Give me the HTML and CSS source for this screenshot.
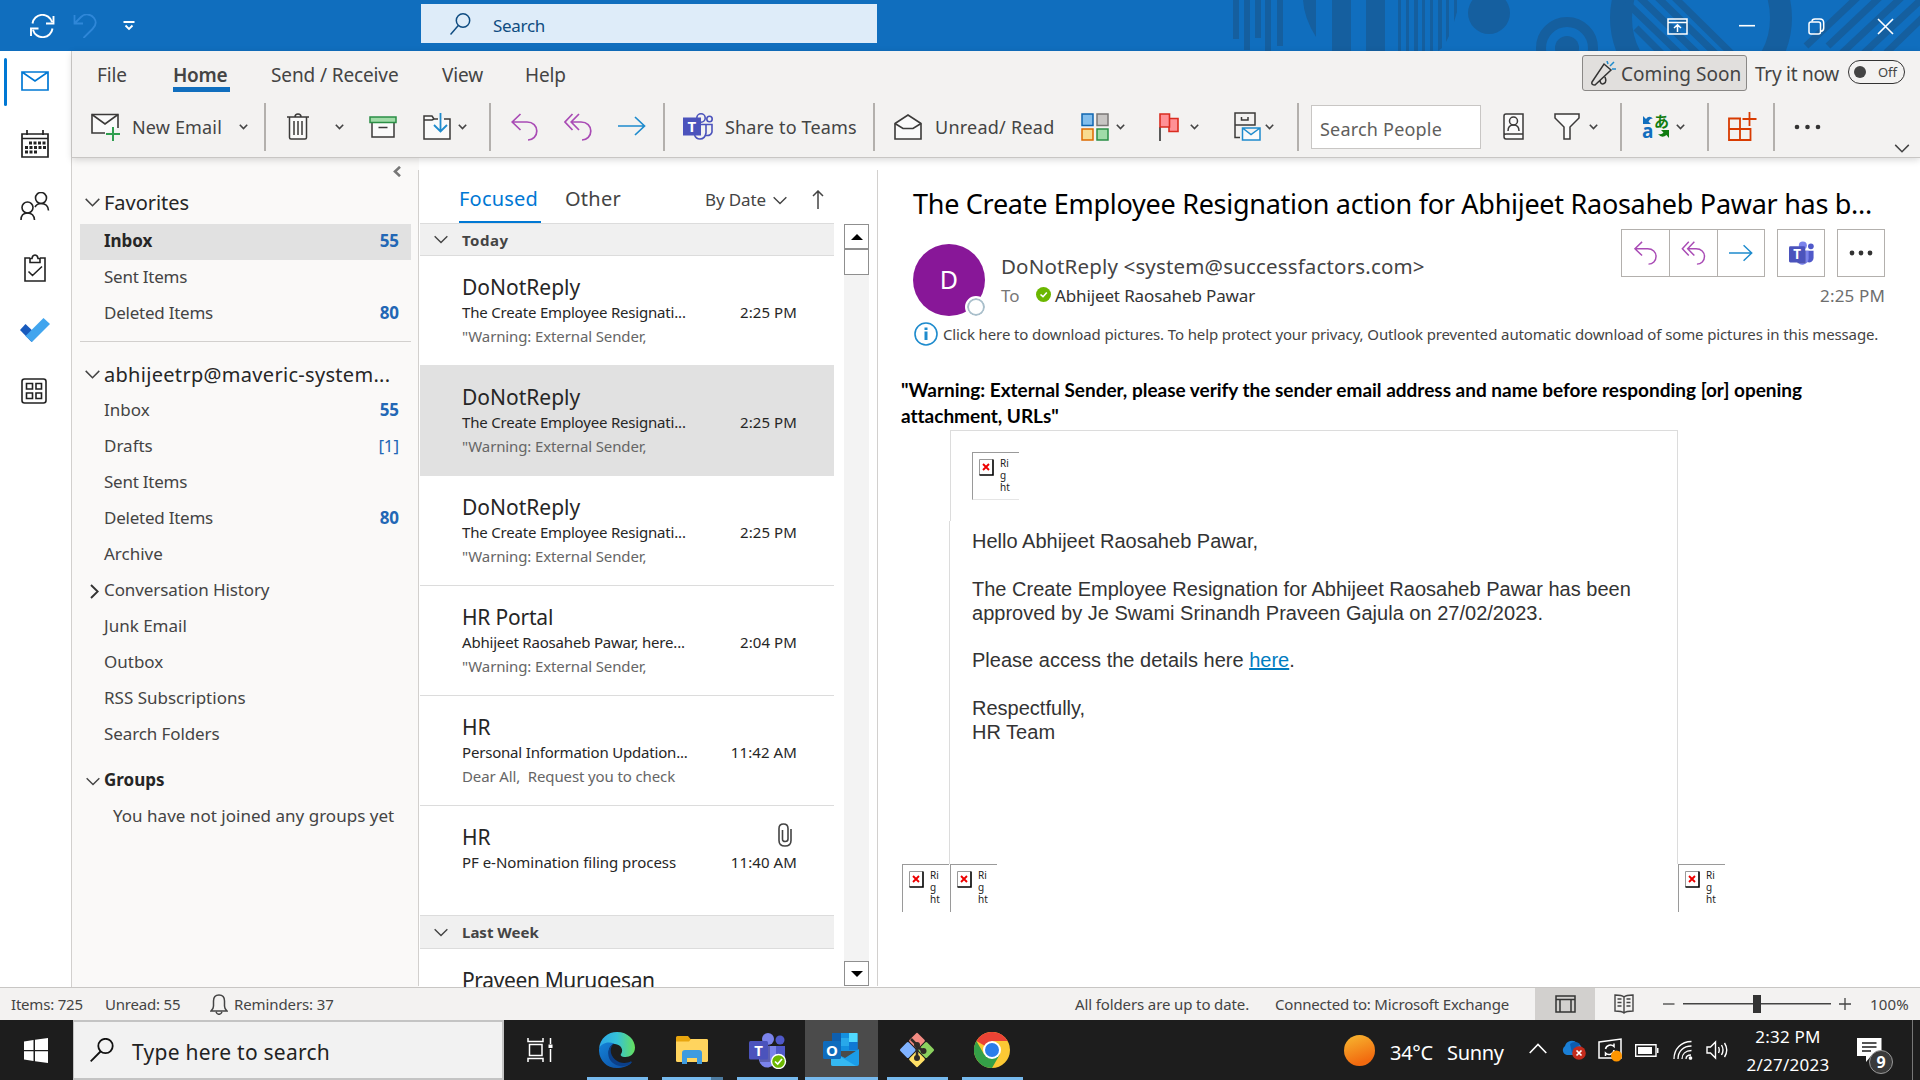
FILE: index.html
```html
<!DOCTYPE html>
<html lang="en">
<head>
<meta charset="utf-8">
<title>Inbox - Outlook</title>
<link rel="stylesheet" href="styles.css">
</head>
<body>
<svg class="defs" aria-hidden="true">
  <symbol id="chev" viewBox="0 0 9 6"><path d="M.8 .8 4.500 4.600 8.200 .8" fill="none" stroke="#444" stroke-width="1.600"/></symbol>
  <symbol id="down" viewBox="0 0 15 9"><path d="M.7 .9 7.500 7.700 14.300 .9" fill="none" stroke="#444" stroke-width="1.500"/></symbol>
  <symbol id="reply" viewBox="0 0 27 28"><path d="M9.500 1 1.200 9 9.500 17M1.200 9H16C22 9 25.800 13 25.800 18S22 27 17 27" fill="none" stroke="#a94bb5" stroke-width="1.700"/></symbol>
  <symbol id="replyall" viewBox="0 0 28 28"><path d="M8.500 1 1 9 8.500 17M15 1 7.200 9 15 17M7.200 9H17C23 9 26.800 13 26.800 18S23 27 18 27" fill="none" stroke="#a94bb5" stroke-width="1.700"/></symbol>
  <symbol id="forward" viewBox="0 0 28 20"><path d="M0 10H26.500M17 1 26.500 10 17 19" fill="none" stroke="#1e8bcd" stroke-width="1.700"/></symbol>
  <symbol id="xbox" viewBox="0 0 15 17"><path d="M.5 16V.5H14" fill="none" stroke="#999"/><path d="M14 .5V16H.5" fill="none" stroke="#000" stroke-width="1.600"/><path d="M4 5 10 11M10 5 4 11" stroke="#e00" stroke-width="1.900"/></symbol>
</svg>

<header class="titlebar">
  <svg class="pattern" viewBox="1233 0 687 51" width="687" height="51">
    <g fill="#155f9f">
      <path d="M1233 0h6v39h-6zM1244 0h6v50h-6zM1255 0h6v38h-6zM1265 0h6v51h-6zM1277 0h6v46h-6zM1303 0h13v37Q1304 18 1303 0zM1332 0h19v51h-19zM1366 0h19v51h-19zM1398 0h3v51h-3zM1406 0h3v51h-3zM1414 0h4v51h-4zM1422 0h3v51h-3zM1430 0h3v51h-3zM1438 0h4v48l-4 3zM1446 0h3v36l-3 6zM1454 0h3v12l-3 10z"/>
      <circle cx="1489" cy="13" r="21"/>
      <circle cx="1567" cy="48" r="12"/>
    </g>
    <circle cx="1567" cy="48" r="26" fill="none" stroke="#155f9f" stroke-width="10"/>
    <circle cx="1701" cy="18" r="80" fill="none" stroke="#155f9f" stroke-width="22"/>
    <g stroke="#155f9f" stroke-width="7">
      <path d="M1626 2 1686 60M1634 -8 1704 60M1652 -8 1722 60M1672 -5 1738 60M1636 28 1668 60"/>
      <path d="M1806 46 1860 -5M1828 46 1882 -5M1842 53 1904 -5M1864 53 1926 -5M1886 53 1946 -5"/>
    </g>
  </svg>
  <svg width="25" height="24" viewBox="0 0 25 24" fill="none" stroke="#fff" stroke-width="1.900"><path d="M2.500 9.500A10 10 0 0 1 22 8M22.500 14.500A10 10 0 0 1 3 16M23.500 2V9.500H16M1 22V14.500H8.500"/></svg>
  <svg width="24" height="24" viewBox="0 0 24 24" fill="none" stroke="#2f87d8" stroke-width="1.800"><path d="M1.500 1V9.500H10M1.500 9.500 8 3C12-1 18 0 21 4S22.500 12 19.500 15L10.500 24"/></svg>
  <svg width="12" height="10" viewBox="0 0 12 10" fill="none" stroke="#fff" stroke-width="1.800"><path d="M.5 1H11.500M2.500 4.500 6 8 9.500 4.500"/></svg>
  <div class="tsearch">
    <svg width="21" height="22" viewBox="0 0 21 22" fill="none" stroke="#0f4c81" stroke-width="1.500"><circle cx="13" cy="7.500" r="6.700"/><path d="M8.300 12.500 .5 21.500"/></svg>
    <span>Search</span>
  </div>
  <svg width="21" height="17" viewBox="0 0 21 17" fill="none" stroke="#fff" stroke-width="1.500"><path d="M1 1H20V16H1zM1 4.500H20M10.500 14V7M7 10 10.500 6.800 14 10"/></svg>
  <svg width="16" height="17" viewBox="0 0 16 17"><path d="M0 7.700H16" stroke="#fff" stroke-width="1.600"/></svg>
  <svg width="17" height="17" viewBox="0 0 17 17" fill="none" stroke="#fff" stroke-width="1.500"><rect x="1" y="4" width="11.500" height="12" rx="2"/><path d="M4 3.500Q4 1 7 1H12Q15.700 1 15.700 5V10Q15.700 13 13 13.300"/></svg>
  <svg width="17" height="17" viewBox="0 0 17 17" stroke="#fff" stroke-width="1.600"><path d="M1 1 16 16M16 1 1 16"/></svg>
</header>

<div class="app">
  <nav class="rail">
    <svg class="r-mail" width="28" height="20" viewBox="0 0 28 20" fill="none" stroke="#0078d4" stroke-width="1.700"><path d="M1 1H27V19H1zM1 1 14 10 27 1"/></svg>
    <svg class="r-cal" width="28" height="28" viewBox="0 0 28 28" fill="none" stroke="#222" stroke-width="1.700"><path d="M1 4H27V27H1zM1 8.500H27M6 0V5M22 0V5"/><path d="M8 13H26M4 17.500H26M4 22H17" stroke-width="3" stroke-dasharray="3 1.500"/></svg>
    <svg class="r-people" width="30" height="28" viewBox="0 0 30 28" fill="none" stroke="#222" stroke-width="1.600"><circle cx="7.500" cy="15.500" r="5.500"/><path d="M1 28Q1 21 7.500 21T14.500 28"/><circle cx="21" cy="6" r="5.500"/><path d="M15 15Q17 11.500 21 11.500Q28 11.500 28.500 18.500"/></svg>
    <svg class="r-tasks" width="22" height="28" viewBox="0 0 22 28" fill="none" stroke="#222" stroke-width="1.600"><path d="M6 4H1V27H21V4H16M6 8.500V4.500H8Q8.500 1 11 1T14 4.500H16V8.500zM4.500 17.500 8.500 21.500 18 12.500"/></svg>
    <svg class="r-todo" width="30" height="24" viewBox="0 0 30 24"><path d="M0 12 5.500 6 17 17 11.500 24z" fill="#185abd"/><path d="M5.500 18 23.500 0 30 6 12 24z" fill="#41a5ee"/></svg>
    <svg class="r-apps" width="26" height="26" viewBox="0 0 26 26" fill="none" stroke="#222" stroke-width="1.600"><rect x="1" y="1" width="24" height="24" rx="2.500"/><path d="M5.500 5.500H11.500V11H5.500zM15 5.500H20.500V11H15zM5.500 15H11.500V20.500H5.500zM15 15H20.500V20.500H15z"/></svg>
  </nav>

  <div class="workspace">
    <div class="ribbon">
      <div class="tabs">
        <span>File</span><span class="current">Home</span><span>Send / Receive</span><span>View</span><span>Help</span>
        <div class="coming">
          <svg width="26" height="25" viewBox="0 0 26 25" fill="none" stroke="#333" stroke-width="1.500"><path d="M1 21 13 3 20 9 4 24Q0 24 1 21zM9 20Q10 24 13 22.500T14 16"/><path d="M17 3 16 0M19 5 23 1M21 8H25" stroke="#1e8bcd"/></svg>
          <span>Coming Soon</span>
        </div>
        <span class="try">Try it now</span>
        <div class="toggle"><i></i><span>Off</span></div>
      </div>
      <div class="toolbar">
        <svg width="30" height="28" viewBox="0 0 30 28" fill="none" stroke="#3b3a39" stroke-width="1.600"><path d="M14 20H1V1.500H27V15" fill="#fafafa"/><path d="M1 1.500 14 11 27 1.500"/><path d="M22 14V28M15 21H29" stroke="#2f9e4f" stroke-width="2"/></svg>
        <span>New Email</span>
        <svg width="9" height="6"><use href="#chev"/></svg>
        <i class="sep"></i>
        <svg width="22" height="27" viewBox="0 0 22 27" fill="none" stroke="#3b3a39" stroke-width="1.500"><path d="M2.500 4V24.500Q2.500 26 4 26H18Q19.500 26 19.500 24.500V4" fill="#fafafa"/><path d="M0 4H22M8 4Q8 1 11 1T14 4M7 8V22M11 8V22M15 8V22"/></svg>
        <svg width="9" height="6"><use href="#chev"/></svg>
        <svg width="28" height="22" viewBox="0 0 28 22" fill="none" stroke="#3b3a39" stroke-width="1.500"><path d="M3 6V21H25V6" fill="#fafafa"/><path d="M9.500 11.500H18.500"/><path d="M1 1H27V6.500H1z" fill="#a0dba8" stroke="#2a8f45"/></svg>
        <svg width="28" height="27" viewBox="0 0 28 27" fill="none" stroke="#3b3a39" stroke-width="1.500"><path d="M15 6H11L9 3H1V26H27V6H21" fill="#fafafa"/><path d="M1 7H9L11 6"/><path d="M17.500 0V18M11 12 17.500 18.500 24 12" stroke="#1e8bcd" stroke-width="1.800"/></svg>
        <svg width="9" height="6"><use href="#chev"/></svg>
        <i class="sep"></i>
        <svg width="27" height="28"><use href="#reply"/></svg>
        <svg width="28" height="28"><use href="#replyall"/></svg>
        <svg width="28" height="20" class="up"><use href="#forward"/></svg>
        <i class="sep"></i>
        <svg width="30" height="27" viewBox="0 0 30 27" fill="none" stroke="#4b53bc" stroke-width="1.600"><circle cx="18" cy="5" r="4.200"/><circle cx="26.500" cy="6" r="2.700"/><path d="M22.500 11.500H29V19Q28 23 23 22.500M18 11.500H23V20Q22 26 17 26Q13 26 11.500 22"/><path d="M0 4.500H18V22.500H0z" fill="#4b53bc" stroke="none"/><text x="9" y="19" text-anchor="middle" class="logo-t">T</text></svg>
        <span>Share to Teams</span>
        <i class="sep"></i>
        <svg width="28" height="26" viewBox="0 0 28 26" fill="#fafafa" stroke="#3b3a39" stroke-width="1.600"><path d="M1 25V9.500L14 1 27 9.500V25z"/><path d="M1 9.500 9 14.500H19L27 9.500" fill="none"/></svg>
        <span class="unread">Unread/ Read</span>
        <svg width="28" height="28" viewBox="0 0 28 28" stroke-width="1.500"><path d="M1 1H12V12.500H1z" fill="#83beec" stroke="#0f66b0"/><path d="M16 1H27V12.500H16z" fill="#c8c6c4" stroke="#797775"/><path d="M1 16H12V27H1z" fill="#f8db8f" stroke="#dd6b00"/><path d="M16 16H27V27H16z" fill="#a0dba8" stroke="#2a8f45"/></svg>
        <svg width="9" height="6"><use href="#chev"/></svg>
        <svg width="20" height="28" viewBox="0 0 20 28" stroke="#d92c20" stroke-width="1.600" fill="#ff9196"><path d="M1 14V28" stroke="#333"/><path d="M10 5.500H19V18.500H10z"/><path d="M1 1H10.500V14H1z"/></svg>
        <svg width="9" height="6"><use href="#chev"/></svg>
        <svg width="27" height="29" viewBox="0 0 27 29" fill="none" stroke="#3b3a39" stroke-width="1.500"><path d="M6 25.500H1V1H21V13H1M7.500 5V8H14V5" /><path d="M8.500 16H26V28H8.500zM8.500 16 17 22.500 26 16" fill="#fafafa" stroke="#1e8bcd"/></svg>
        <svg width="9" height="6"><use href="#chev"/></svg>
        <i class="sep"></i>
        <div class="people">Search People</div>
        <svg width="21" height="27" viewBox="0 0 21 27" fill="#fafafa" stroke="#3b3a39" stroke-width="1.500"><path d="M3 1H20V26H3Q1 26 1 23.500V3Q1 1 3 1zM1 22.500Q1 21 3 21H20"/><circle cx="10.500" cy="8" r="4"/><path d="M5 18Q5 12 10.500 12T16 18" fill="none"/></svg>
        <svg width="26" height="27" viewBox="0 0 26 27" fill="#fafafa" stroke="#3b3a39" stroke-width="1.500"><path d="M1 1H25V5L16 14V26H10V14L1 5z"/></svg>
        <svg width="9" height="6"><use href="#chev"/></svg>
        <i class="sep"></i>
        <svg class="translate" width="28" height="28" viewBox="0 0 28 28"><path d="M1 3 4 6Q7 2 11 5.500Q8 5 6.500 8.500L9 11H1z" fill="#106ebe"/><path d="M27 25 24.500 22Q20 26 16 21Q20 22 21.500 19.500L19 17H27z" fill="#107c10"/><text x="0" y="25" class="tr-a">a</text><text x="12" y="14" class="tr-j">あ</text></svg>
        <svg width="9" height="6"><use href="#chev"/></svg>
        <i class="sep"></i>
        <svg width="29" height="29" viewBox="0 0 29 29" fill="none" stroke="#d83b01" stroke-width="1.800"><path d="M13 6.500H1V28H22.500V17H1M12 6.500V28M21.500 0V14M14.500 7H28.500"/></svg>
        <i class="sep"></i>
        <svg width="27" height="6" viewBox="0 0 27 6" fill="#333"><circle cx="3" cy="3" r="2.300"/><circle cx="13.500" cy="3" r="2.300"/><circle cx="24" cy="3" r="2.300"/></svg>
        <svg class="collapse" width="16" height="9"><use href="#down"/></svg>
      </div>
    </div>

    <div class="panes">
      <aside class="folders">
        <svg class="fold" width="8" height="11" viewBox="0 0 8 11"><path d="M7 .8 2 5.500 7 10.200" fill="none" stroke="#777" stroke-width="2.600"/></svg>
        <h2 class="fav"><svg width="15" height="9"><use href="#down"/></svg>Favorites</h2>
        <div class="folder on"><span>Inbox</span><b>55</b></div>
        <div class="folder"><span class="sm">Sent Items</span></div>
        <div class="folder"><span class="sm">Deleted Items</span><b>80</b></div>
        <hr>
        <h2 class="acct"><svg width="15" height="9"><use href="#down"/></svg>abhijeetrp@maveric-system...</h2>
        <div class="folder"><span>Inbox</span><b>55</b></div>
        <div class="folder"><span>Drafts</span><em>[1]</em></div>
        <div class="folder"><span class="sm">Sent Items</span></div>
        <div class="folder"><span class="sm">Deleted Items</span><b>80</b></div>
        <div class="folder"><span>Archive</span></div>
        <div class="folder"><svg width="9" height="15" viewBox="0 0 9 15"><path d="M1 1 7.700 7.500 1 14" fill="none" stroke="#333" stroke-width="1.900"/></svg><span class="ch">Conversation History</span></div>
        <div class="folder"><span>Junk Email</span></div>
        <div class="folder"><span>Outbox</span></div>
        <div class="folder"><span>RSS Subscriptions</span></div>
        <div class="folder"><span class="ch">Search Folders</span></div>
        <div class="folder groups"><svg width="14" height="9"><use href="#down"/></svg><strong>Groups</strong></div>
        <div class="folder none"><span>You have not joined any groups yet</span></div>
      </aside>

      <section class="list">
        <div class="messages">
          <div class="filter">
            <span class="focused">Focused</span><span class="other">Other</span><span class="by">By Date</span>
            <svg width="14" height="9"><use href="#down"/></svg>
            <svg class="sort" width="12" height="19" viewBox="0 0 12 19"><path d="M6 19V1M1 6 6 1 11 6" fill="none" stroke="#444" stroke-width="1.500"/></svg>
          </div>
          <h3><svg width="14" height="9"><use href="#down"/></svg><span class="today">Today</span></h3>
          <article><h4>DoNotReply</h4><p class="subj"><span>The Create Employee Resignati...</span><time>2:25 PM</time></p><p class="prev">"Warning: External Sender,</p></article>
          <article class="sel"><h4>DoNotReply</h4><p class="subj"><span>The Create Employee Resignati...</span><time>2:25 PM</time></p><p class="prev">"Warning: External Sender,</p></article>
          <article><h4>DoNotReply</h4><p class="subj"><span>The Create Employee Resignati...</span><time>2:25 PM</time></p><p class="prev">"Warning: External Sender,</p></article>
          <article><h4 class="hp">HR Portal</h4><p class="subj"><span>Abhijeet Raosaheb Pawar, here...</span><time>2:04 PM</time></p><p class="prev">"Warning: External Sender,</p></article>
          <article><h4>HR</h4><p class="subj"><span>Personal Information Updation...</span><time>11:42 AM</time></p><p class="prev wide">Dear All,&nbsp; Request you to check</p></article>
          <article class="last"><h4>HR<svg width="14" height="24" viewBox="0 0 14 24"><path d="M13 6V17.500Q13 23 7 23T1 17.500V5.500Q1 1 5.500 1T10 5.500V16Q10 18.500 7.200 18.500T4.500 16V7" fill="none" stroke="#444" stroke-width="1.600"/></svg></h4><p class="subj"><span class="pf">PF e-Nomination filing process</span><time>11:40 AM</time></p></article>
          <h3><svg width="14" height="9"><use href="#down"/></svg><span>Last Week</span></h3>
          <article><h4 class="pm">Praveen Murugesan</h4></article>
        </div>
        <div class="scroll">
          <div class="btn"><svg width="12" height="6"><path d="M0 6 6 0 12 6z"/></svg></div>
          <div class="thumb"></div>
          <div class="btn end"><svg width="12" height="6"><path d="M0 0H12L6 6z"/></svg></div>
        </div>
      </section>

      <main class="reading">
        <h1>The Create Employee Resignation action for Abhijeet Raosaheb Pawar has b...</h1>
        <div class="head">
          <div class="avatar">D<i></i></div>
          <div class="who">
            <div class="from">DoNotReply &lt;system@successfactors.com&gt;</div>
            <div class="to"><span>To</span><svg width="15" height="15" viewBox="0 0 15 15"><circle cx="7.500" cy="7.500" r="7.500" fill="#6bb700"/><path d="M4.500 7.500 7 9.700 10.800 5.500" fill="none" stroke="#fff" stroke-width="1.600"/></svg>Abhijeet Raosaheb Pawar</div>
          </div>
          <div class="acts">
            <div class="btns">
              <div><svg width="25" height="24"><use href="#reply"/></svg></div><div><svg width="25" height="24"><use href="#replyall"/></svg></div><div><svg width="24" height="18"><use href="#forward"/></svg></div>
              <div class="solo"><svg width="25" height="25" viewBox="0 0 28 28"><circle cx="15.500" cy="5" r="4.500" fill="#7b83eb"/><circle cx="24.500" cy="6" r="3.200" fill="#5059c9"/><path d="M19 11h8.500v8a5 5 0 0 1-7 4.500z" fill="#5059c9"/><path d="M9 11h13v9a7 7 0 0 1-13 3z" fill="#7b83eb"/><path d="M9 9.500h9.500V25h-9z" fill="#3d3e78" opacity=".6"/><rect y="6" width="18" height="18" rx="1.500" fill="#4b53bc"/><text x="9" y="20" text-anchor="middle" class="logo-t">T</text></svg></div>
              <div class="solo"><svg width="24" height="6" viewBox="0 0 24 6" fill="#333"><circle cx="3" cy="3" r="2.400"/><circle cx="12" cy="3" r="2.400"/><circle cx="21" cy="3" r="2.400"/></svg></div>
            </div>
            <time>2:25 PM</time>
          </div>
        </div>
        <div class="info"><svg width="24" height="24" viewBox="0 0 24 24"><circle cx="12" cy="12" r="11" fill="none" stroke="#1e8bcd" stroke-width="1.600"/><path d="M12 9.500V18M12 5.500V8" stroke="#1e8bcd" stroke-width="3"/></svg><span>Click here to download pictures. To help protect your privacy, Outlook prevented automatic download of some pictures in this message.</span></div>
        <div class="mail">
          <p class="warn">"Warning: External Sender, please verify the sender email address and name before responding [or] opening<br>attachment, URLs"</p>
          <div class="card">
            <div class="card-head"><div class="missing"><svg width="15" height="17"><use href="#xbox"/></svg><span>Ri<br>g<br>ht</span></div></div>
            <div class="card-body">
              Hello Abhijeet Raosaheb Pawar,<br><br>
              The Create Employee Resignation for Abhijeet Raosaheb Pawar has been<br>
              approved by Je Swami Srinandh Praveen Gajula on 27/02/2023.<br><br>
              Please access the details here <a href="#">here</a>.<br><br>
              Respectfully,<br>HR Team
            </div>
          </div>
          <div class="foot">
            <div class="missing"><svg width="15" height="17"><use href="#xbox"/></svg><span>Ri<br>g<br>ht</span></div>
            <div class="missing"><svg width="15" height="17"><use href="#xbox"/></svg><span>Ri<br>g<br>ht</span></div>
            <div class="missing far"><svg width="15" height="17"><use href="#xbox"/></svg><span>Ri<br>g<br>ht</span></div>
          </div>
        </div>
      </main>
    </div>
  </div>
</div>

<footer class="status">
  <span class="tight">Items: 725</span><span class="tight">Unread: 55</span>
  <svg width="18" height="21" viewBox="0 0 18 21" fill="none" stroke="#444" stroke-width="1.500"><path d="M1 17Q3.500 15 3.500 12V7Q3.500 1 9 1T14.500 7V12Q14.500 15 17 17zM6 18Q7 20.300 9 20.300T12 18"/></svg>
  <span class="rem">Reminders: 37</span>
  <span>All folders are up to date.</span><span class="con">Connected to: Microsoft Exchange</span>
  <div class="view"><svg width="21" height="18" viewBox="0 0 21 18" fill="none" stroke="#333" stroke-width="1.500"><path d="M1 1H20V17H1zM1 4.500H20M5 4.500V17M16 4.500V17"/></svg></div>
  <svg width="20" height="20" viewBox="0 0 20 20" fill="none" stroke="#444" stroke-width="1.400"><path d="M10 3Q8 1 1 1V17Q8 17 10 19Q12 17 19 17V1Q12 1 10 3V19M3.500 5H7.500M3.500 8.500H7.500M3.500 12H7.500M12.500 5H16.500M12.500 8.500H16.500M12.500 12H16.500"/></svg>
  <svg width="12" height="12" viewBox="0 0 12 12"><path d="M0 6H11.500" stroke="#444" stroke-width="1.300"/></svg>
  <div class="slider"><i></i></div>
  <svg width="12" height="12" viewBox="0 0 12 12"><path d="M0 6H12M6 0V12" stroke="#444" stroke-width="1.300"/></svg>
  <span class="pct">100%</span>
</footer>

<div class="taskbar">
  <svg width="24" height="25" viewBox="0 0 24 25" fill="#fff"><path d="M0 3.500 9.500 2V12H0zM11 1.800 24 0V12H11zM0 13.200H9.500V23L0 21.500zM11 13.200H24V25L11 23.200z"/></svg>
  <div class="wsearch"><svg width="24" height="24" viewBox="0 0 24 24" fill="none" stroke="#111" stroke-width="1.800"><circle cx="15.500" cy="8" r="7.200"/><path d="M10.500 13.500 .7 23.300"/></svg><span>Type here to search</span></div>
  <svg width="26" height="24" viewBox="0 0 26 24" fill="none" stroke="#fff" stroke-width="1.500"><path d="M1 0V3.500H16V0M1 24V20.500H16V24M2.500 6.500H15V17.500H2.500zM23.500 0V6M23.500 11V24"/><path d="M21.500 6.500H25.500V10H21.500z" fill="#fff" stroke="none"/></svg>
  <div class="tapp"><svg width="36" height="36" viewBox="0 0 36 36"><defs><linearGradient id="e1" x1="0" y1=".3" x2="1" y2=".3"><stop offset="0" stop-color="#2ba6e8"/><stop offset=".5" stop-color="#35c1d8"/><stop offset="1" stop-color="#66e05c"/></linearGradient><linearGradient id="e2" x1="0" y1="0" x2="1" y2="1"><stop offset="0" stop-color="#1482d8"/><stop offset="1" stop-color="#0c4a9e"/></linearGradient></defs><path d="M0 17C1 6 9 0 18 0c11 0 18 8 18 15.500C36 22 31 25 26.500 25c-4 0-5.500-1.500-4.500-3 3-4 0-9.500-6-10C8 11 2 13 0 17z" fill="url(#e1)"/><path d="M0 17C2 11 9 9 15 11.500c-4 2-6 6-5 11C11.500 30 20 34 28 31.500c2-.6 3.500-1 4-.5C29 34.500 23.500 36 18 36 7 36-.5 27 0 17z" fill="url(#e2)"/><path d="M15 11.500c-5 4-4 12 1 16 5 4.500 12 4 16 1.800l1 1C27 37 12 35 9.500 24 8.500 18 11 13.500 15 11.500z" fill="#0b3f88"/></svg></div>
  <div class="tapp folderapp"><svg width="32" height="28" viewBox="0 0 32 28"><path d="M0 1.500Q0 0 1.500 0H12L14.500 3H30.500Q32 3 32 4.500V25H0z" fill="#e8a50e"/><path d="M0 5.500H13L15 3H30.500Q32 3 32 4.500V24.500Q32 26 30.500 26H1.500Q0 26 0 24.500z" fill="#ffd45e"/><path d="M6 28V17Q6 14 9 14H23Q26 14 26 17V28H21V22H11V28z" fill="#3e9be0"/></svg></div>
  <div class="tapp teamsapp"><svg width="38" height="36" viewBox="0 0 38 36"><circle cx="19" cy="6" r="6" fill="#7b83eb"/><circle cx="31" cy="7" r="4.500" fill="#5059c9"/><path d="M26 13H36V24a6 6 0 0 1-10 3z" fill="#5059c9"/><path d="M10 13H27V25a8.500 8.500 0 0 1-17 2z" fill="#7b83eb"/><path d="M10 11.500H21V29H11z" fill="#3d3e78" opacity=".5"/><rect y="8" width="19" height="18.500" rx="1.500" fill="#4b53bc"/><text x="9.500" y="22.500" text-anchor="middle" class="logo-t">T</text><circle cx="29.500" cy="28.500" r="7" fill="#6bb700" stroke="#fff" stroke-width="1.400"/><path d="M26 28.500 28.700 31 33 26" fill="none" stroke="#fff" stroke-width="1.700"/></svg></div>
  <div class="tapp active"><svg width="36" height="33" viewBox="0 0 36 33"><path d="M10 0H33Q34.500 0 34.500 1.500V18H9V1.500Q9 0 10 0z" fill="#1490df"/><path d="M9 0H18V9H9z" fill="#0f5fae"/><path d="M18 5H26V13H18z" fill="#28a8ea"/><path d="M26 0H34.500V9H26z" fill="#50d9ff"/><path d="M26 9H34.500V17H26z" fill="#0f78d4"/><path d="M8 18 22 25 36 16V31Q36 33 34 33H10Q8 33 8 31z" fill="#1b9de8"/><path d="M8 18 33 33H10Q8 33 8 31z" fill="#35b8f1"/><rect y="8" width="18" height="18" rx="1.500" fill="#0f6cbd"/><text x="9" y="22.500" text-anchor="middle" class="logo-t">O</text></svg></div>
  <div class="tapp"><svg width="36" height="36" viewBox="0 0 36 36"><g transform="rotate(45 18 18)"><rect x="5.500" y="5.500" width="12" height="12" rx="1.500" fill="#f28b82"/><rect x="18.500" y="5.500" width="12" height="12" rx="1.500" fill="#8bd15f"/><rect x="5.500" y="18.500" width="12" height="12" rx="1.500" fill="#80b3ff"/><rect x="18.500" y="18.500" width="12" height="12" rx="1.500" fill="#ffe066"/></g><path d="M12 7 18 13V26M18 14 24 19" stroke="#302a26" stroke-width="2.600" fill="none"/><circle cx="18" cy="13" r="3" fill="#302a26"/><circle cx="18" cy="26" r="3" fill="#302a26"/><circle cx="24.500" cy="19" r="3" fill="#302a26"/></svg></div>
  <div class="tapp"><svg width="36" height="36" viewBox="0 0 36 36"><circle cx="18" cy="18" r="18" fill="#fcc934"/><path d="M18 18 2.400 9A18 18 0 0 1 33.600 9H18z" fill="#ea4335"/><path d="M2.400 9A18 18 0 0 0 18 36L25.800 22.500 10.200 22.500z" fill="#34a047"/><circle cx="18" cy="18" r="9" fill="#fff"/><circle cx="18" cy="18" r="7" fill="#2b7de9"/></svg></div>
  <i class="sun"></i>
  <span class="temp">34°C</span><span class="sunny">Sunny</span>
  <svg class="up2" width="18" height="11" viewBox="0 0 18 11"><path d="M.7 10 9 1.500 17.300 10" fill="none" stroke="#fff" stroke-width="1.600"/></svg>
  <svg width="24" height="20" viewBox="0 0 24 20"><path d="M5 15A5 5 0 0 1 3 6 7 7 0 0 1 15 3Q20 5 20 10V15z" fill="#1a7fd6"/><path d="M8 4a7 7 0 0 1 10 0l-8 9z" fill="#0d5cb0"/><circle cx="17" cy="13" r="6.800" fill="#c42b1c"/><path d="M14.500 10.500 19.500 15.500M19.500 10.500 14.500 15.500" stroke="#fff" stroke-width="1.700"/></svg>
  <svg width="25" height="24" viewBox="0 0 25 24" fill="none" stroke="#fff" stroke-width="1.500"><path d="M1 4 23 1V20H1z"/><path d="M7.500 11A5 5 0 0 1 16 8.500V5.500M16 12A5 5 0 0 1 7.500 15V18"/><circle cx="18.500" cy="18" r="5.500" fill="#ff9500" stroke="none"/></svg>
  <svg width="24" height="13" viewBox="0 0 24 13"><path d="M.7 .7H21V12.300H.7z" fill="none" stroke="#fff" stroke-width="1.400"/><path d="M3 3H17V10H3zM22 4H23.500V9H22z" fill="#fff"/></svg>
  <svg width="20" height="20" viewBox="0 0 20 20" fill="none" stroke="#fff" stroke-width="1.300"><path d="M1 19C1 9 8 1.500 18.500 1.500M5 19C5 11.500 10 6 18.500 6M9 19C9 14 12.500 10.500 18.500 10.500M13 19C13 16.500 15 15 18 15"/><circle cx="17.500" cy="18" r="1.200" fill="#fff"/></svg>
  <svg width="23" height="20" viewBox="0 0 23 20" fill="none" stroke="#fff" stroke-width="1.400"><path d="M1 7H4.500L9.500 2V18L4.500 13H1zM12.500 7Q14 10 12.500 13M15.500 5Q18.500 10 15.500 15M18.500 3Q23 10 18.500 17"/></svg>
  <div class="clock"><span>2:32 PM</span><span>2/27/2023</span></div>
  <div class="notif"><svg width="25" height="25" viewBox="0 0 25 25"><path d="M0 0H24.500V18H14L9 24V18H0z" fill="#fff"/><path d="M5 5H19.500M5 9H19.500M5 13H14" stroke="#1d1d1d" stroke-width="1.500"/></svg><i>9</i></div>
  <i class="peek"></i>
</div>
</body>
</html>
```
FILE: styles.css
```css
* { box-sizing: border-box; }
body { margin: 0; width: 1920px; height: 1080px; overflow: hidden; background: #fff; color: #444; font-family: "Noto Sans", sans-serif; font-size: 17px; display: flex; flex-direction: column; }
svg { display: block; flex: none; }
i, em { font-style: normal; }
h1, h2, h3, h4, p { margin: 0; font-weight: 400; }
span, h1, h2, h3, h4, p, time { white-space: nowrap; }
.defs { display: none; }
.translate { overflow: visible; }
.logo-t { font: 700 15px "Noto Sans", sans-serif; fill: #fff; stroke: none; }
.tr-a { font: 700 19px "Noto Sans", sans-serif; fill: #106ebe; }
.tr-j { font: 700 15px "Noto Sans CJK JP", sans-serif; fill: #107c10; }

/* Title bar */
.titlebar { position: relative; height: 51px; flex: none; background: #106ebe; display: grid; grid-template-columns: 43px 50px 298px 1246px 72px 69px 69px 43px; padding-left: 30px; align-items: center; }
.titlebar > svg { position: relative; margin-top: 1px; }
.titlebar > .pattern { position: absolute; right: 0; top: 0; margin: 0; }
.tsearch { width: 456px; height: 39px; margin-top: -4px; background: #deecf9; color: #0f4c81; display: flex; align-items: center; padding-left: 29px; gap: 22px; letter-spacing: -.3px; }
.tsearch span { margin-top: 4px; }

/* Left rail */
.app { display: flex; height: 936px; flex: none; }
.rail { width: 72px; border-right: 1px solid #d2d0ce; background: #fff; position: relative; flex: none; }
.rail::before { content: ""; position: absolute; left: 4px; top: 7px; width: 3px; height: 48px; border-radius: 2px; background: #0078d4; }
.rail svg { margin-left: 21px; }
.rail .r-mail { margin-top: 20px; }
.rail .r-cal { margin-top: 39px; }
.rail .r-people { margin: 34px 0 0 20px; }
.rail .r-tasks { margin: 34px 0 0 24px; }
.rail .r-todo { margin: 36px 0 0 20px; }
.rail .r-apps { margin-top: 36px; }

/* Ribbon */
.workspace { flex: 1; min-width: 0; display: flex; flex-direction: column; }
.ribbon { height: 107px; flex: none; background: #f3f2f1; border-bottom: 1px solid #c8c6c4; box-shadow: 0 2px 7px rgba(0,0,0,.15); z-index: 1; }
.tabs { height: 46px; display: grid; grid-template-columns: 76px 98px 171px 83px 1057px 173px 93px 60px; padding-left: 25px; align-items: center; font-size: 19px; letter-spacing: -.12px; padding-top: 1px; }
.tabs .current { position: relative; font-weight: 600; letter-spacing: -.3px; line-height: 26px; }
.current::after { content: ""; position: absolute; left: 0; top: 25px; width: 57px; height: 5px; background: #106ebe; }
.coming { width: 165px; height: 36px; margin-top: -3px; border: 1px solid #8a8886; border-radius: 3px; background: #e1dfdd; display: flex; align-items: center; gap: 4px; padding-left: 8px; letter-spacing: .06px; }
.coming span { margin-top: 1px; }
.try { letter-spacing: -.26px; margin-top: -1px; }
.toggle { width: 57px; height: 24px; margin-top: -5px; border: 1.5px solid #333; border-radius: 12px; display: flex; align-items: center; gap: 12px; padding-left: 5px; font-size: 13px; }
.toggle i { width: 12px; height: 12px; border-radius: 50%; background: #444; }
.toolbar { height: 48px; margin-top: 6px; padding-left: 19px; display: grid; align-items: center; font-size: 18px; letter-spacing: .16px;
  grid-template-columns: 41px 107px 25px 23px 48px 34px 54px 35px 31px 22px 53px 54px 45px 20px 42px 148px 21px 41px 146px 35px 43px 31px 44px 31px 32px 14px 192px 51px 35px 31px 22px 34px 31px 21px 45px 21px 100px 20px; }
.toolbar > svg { margin-top: -1px; }
.toolbar > .up { margin-top: -3px; }
.toolbar > .collapse { align-self: end; margin-bottom: -2px; }
.unread { letter-spacing: .24px; }
.sep { width: 1.500px; height: 48px; background: #b3b0ad; }
.people { width: 170px; height: 44px; background: #fff; border: 1px solid #c8c6c4; line-height: 46px; padding-left: 8px; color: #605e5c; letter-spacing: .2px; }

/* Folder pane */
.panes { flex: 1; min-height: 0; display: flex; }
.folders { width: 347px; background: #faf9f8; position: relative; flex: none; padding-right: 8px; color: #444; }
.folders::after { content: ""; position: absolute; right: 0; top: 12px; bottom: 1px; width: 1px; background: #d2d0ce; }
.fold { position: absolute; left: 321px; top: 8px; }
.folders h2 { display: flex; align-items: center; gap: 4px; padding-left: 13px; font-size: 20px; color: #262626; }
.fav { height: 44px; margin-top: 22px; letter-spacing: -.04px; }
.acct { height: 37px; margin-top: 14px; letter-spacing: .3px; }
.folders hr { height: 1px; border: 0; background: #d2d0ce; margin: 9px 0 0 8px; }
.folder { height: 36px; margin-left: 8px; padding: 0 12px 3px 24px; display: flex; align-items: center; justify-content: space-between; position: relative; }
.folder svg { position: absolute; left: 10px; top: 11px; }
.folder .sm { letter-spacing: -.24px; }
.folder .ch { letter-spacing: -.1px; }
.folder b, .folder em { color: #2267b5; letter-spacing: -.1px; }
.folder.on { background: #e1e1e1; }
.folder.on span { font-weight: 700; color: #262626; letter-spacing: -.05px; }
.folder.groups { margin-top: 10px; }
.folder.groups svg { left: 6px; top: 14px; }
.folder strong { color: #262626; }
.folder.none { padding-left: 33px; letter-spacing: .02px; }

/* Message list */
.list { width: 459px; flex: none; display: flex; padding-left: 1px; position: relative; overflow: hidden; }
.list::after { content: ""; position: absolute; right: 0; top: 12px; bottom: 1px; width: 1px; background: #d2d0ce; }
.messages { width: 414px; overflow: hidden; }
.filter { height: 65px; padding: 16px 0 0 39px; display: grid; grid-template-columns: 106px 140px 68px 39px 20px; align-items: center; font-size: 20px; position: relative; }
.focused { color: #0078d4; letter-spacing: .2px; }
.focused::after { content: ""; position: absolute; left: 39px; bottom: 0; width: 82px; height: 2px; background: #0078d4; }
.other { letter-spacing: .25px; }
.filter .by { font-size: 17px; letter-spacing: -.12px; margin-top: 1px; }
.filter svg { margin-top: 4px; }
.filter .sort { margin-top: 2px; }
.list h3 { height: 33px; border: solid #dcdcdc; border-width: 1px 0; background: #f0f0f0; display: flex; align-items: center; gap: 14px; padding: 0 0 0 14px; font-size: 15px; font-weight: 700; }
.today { letter-spacing: .5px; }
.list article { height: 110px; padding: 17px 37px 0 42px; border-bottom: 1px solid #dcdcdc; font-size: 15px; color: #262626; }
.list .sel { background: #e1e1e1; height: 111px; margin-top: -1px; padding-top: 18px; border-color: #e1e1e1; position: relative; }
.list .last { border-bottom: 0; height: 109px; }
.last + h3 { height: 34px; }
.list h4 { font-size: 21px; line-height: 28px; height: 28px; letter-spacing: 0; display: flex; justify-content: space-between; }
.list h4 svg { margin: 0 5px 0 0; }
.list .hp { letter-spacing: -.2px; }
.list .pm { letter-spacing: -.36px; }
.subj { display: flex; justify-content: space-between; line-height: 23px; }
.subj span { letter-spacing: -.19px; }
.subj time { letter-spacing: .1px; }
.subj .pf { letter-spacing: -.03px; }
.prev { line-height: 24px; color: #666; letter-spacing: -.12px; }
.scroll { width: 25px; margin: 66px 0 1px 10px; background: #f3f3f3; display: flex; flex-direction: column; }
.btn { height: 25px; border: 1px solid #8f8f8f; background: #fff; display: flex; align-items: center; justify-content: center; }
.thumb { height: 26px; border: 1px solid #8f8f8f; background: #fff; }
.end { margin-top: auto; }

/* Reading pane */
.reading { flex: 1; min-width: 0; padding: 26px 0 0 35px; }
h1 { font-size: 27px; line-height: 40px; height: 40px; color: #000; letter-spacing: -.285px; }
.head { height: 94px; display: grid; grid-template-columns: 88px 1fr 264px; padding-right: 35px; }
.avatar { width: 72px; height: 72px; margin-top: 20px; border-radius: 50%; background: #881798; color: #fff; font-size: 25px; line-height: 70px; text-align: center; position: relative; }
.avatar i { position: absolute; left: 52px; top: 52px; width: 22px; height: 22px; border-radius: 50%; border: 2px solid #fff; background: #fff; box-shadow: inset 0 0 0 2px #a9bfcb; }
.who { padding-top: 26px; }
.from { font-size: 20.500px; line-height: 32px; letter-spacing: .16px; }
.to { display: flex; line-height: 28px; letter-spacing: -.13px; color: #333; }
.to span { width: 35px; color: #777; }
.to svg { margin: 5px 4px 0 0; }
.btns { display: flex; margin-top: 5px; height: 48px; }
.btns div { width: 49px; margin-right: -1px; border: 1px solid #b3b0ad; display: flex; align-items: center; justify-content: center; }
.btns .solo { width: 48px; margin: 0 0 0 12px; }
.btns .solo:nth-child(4) { margin-left: 13px; }
.acts time { display: block; text-align: right; line-height: 37px; color: #6e6e6e; letter-spacing: .15px; }
.info { height: 32px; display: flex; align-items: center; gap: 5px; padding-left: 1px; font-size: 15px; letter-spacing: -.12px; }
.mail { margin: 27px 0 0 -12px; }
.warn { font: 700 19px/26px Lato, sans-serif; color: #000; letter-spacing: -.01px; }
.card { width: 729px; margin: 1px 0 0 48px; border-right: 1px solid #dcdcdc; height: 434px; }
.card-head { margin-left: 1px; height: 91px; border: solid #dcdcdc; border-width: 1px 0 0 1px; padding: 21px 0 0 21px; }
.card-body { height: 343px; border-left: 1px solid #dcdcdc; padding: 9px 0 0 22px; font: 20px/23.850px "Liberation Sans", sans-serif; color: #333; white-space: nowrap; letter-spacing: .01px; }
.card-body a { color: #007cc1; }
.missing { width: 47px; height: 48px; border: solid #9a9a9a; border-width: 1px 0 0 1px; padding: 6px; display: flex; gap: 6px; color: #222; font-size: 10px; line-height: 12px; }
.missing span { margin-top: -2px; }
.card-head .missing { border-bottom: 1px solid #e5e5e5; }
.foot { display: flex; gap: 1px; margin-left: 1px; }
.far { margin-left: 680px; }

/* Status bar */
.status { height: 33px; flex: none; border-top: 1px solid #c8c6c4; background: #f3f2f1; display: grid; grid-template-columns: 94px 105px 24px 841px 200px 260px 79px 49px 20px 156px 31px 50px; padding-left: 11px; align-items: center; font-size: 15px; letter-spacing: -.12px; }
.tight { letter-spacing: -.2px; }
.rem { letter-spacing: -.1px; }
.con { letter-spacing: -.2px; }
.pct { letter-spacing: .2px; }
.view { width: 60px; height: 32px; background: #d2d0ce; display: flex; align-items: center; justify-content: center; }
.slider { width: 148px; height: 18px; display: flex; align-items: center; justify-content: center; background: linear-gradient(#444, #444) center / 100% 1.500px no-repeat; }
.slider i { width: 8px; height: 18px; background: #333; }

/* Taskbar */
.taskbar { height: 60px; flex: none; background: #1d1d1d; color: #fff; display: grid; padding-left: 24px; align-items: center; grid-template-columns: 49px 454px 60px 75px 75px 69px 81px 75px 382px 46px 57px 82px 33px 36px 37px 38px 33px 39px 112px 55px 8px; }
.wsearch { width: 431px; height: 60px; background: #f2f2f2; border: 2px solid #c4c4c4; border-left-width: 1px; color: #222; display: flex; align-items: center; gap: 18px; padding-left: 16px; font-size: 21px; letter-spacing: .25px; }
.wsearch span { margin-top: 4px; }
.tapp { width: 61px; height: 60px; border-bottom: 3px solid #76b9ed; display: flex; align-items: center; justify-content: center; padding: 2px 2px 0 0; }
.folderapp { border-image: linear-gradient(90deg, #76b9ed 78%, #4d7ba0 78%) 3; border-width: 0 0 3px; border-style: solid; padding: 3px 1px 0 0; }
.teamsapp { padding: 4px 0 0; }
.active { width: 73px; margin-left: -1px; background: #4b4b4b; }
.sun { width: 31px; height: 31px; border-radius: 50%; background: linear-gradient(160deg, #f7b931, #f26a0f 80%); }
.temp, .sunny { font-size: 20px; margin-top: 4px; letter-spacing: -.3px; }
.up2 { margin-top: -3px; }
.clock { width: 86px; display: flex; flex-direction: column; align-items: center; line-height: 28px; letter-spacing: .25px; padding-top: 1px; }
.notif { position: relative; }
.notif i { position: absolute; left: 12px; top: 12px; width: 24px; height: 24px; border-radius: 50%; background: #3a3a3a; border: 1px solid #999; font-size: 16px; font-weight: 700; line-height: 22px; text-align: center; }
.peek { width: 1px; height: 60px; background: #777; }
```
